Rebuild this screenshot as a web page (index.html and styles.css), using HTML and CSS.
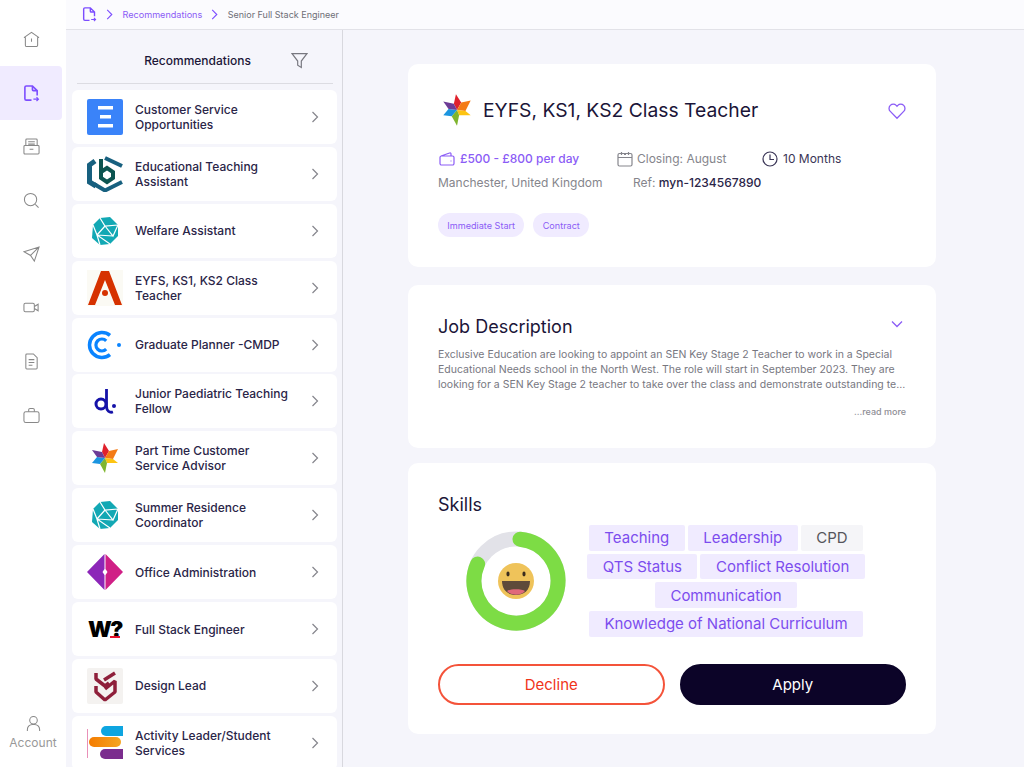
FILE: index.html
```html
<!DOCTYPE html>
<html lang="en">
<head>
    <meta charset="utf-8">
    <title>Senior Full Stack Engineer</title>
    <link rel="stylesheet" href="styles.css">
</head>
<body>
    <!-- shared icons and company logos -->
    <svg class="sprite" xmlns="http://www.w3.org/2000/svg">
        <symbol id="chev" viewBox="0 0 12 12"><path d="M3.500 1 8.500 6l-5 5" fill="none" stroke="currentColor" stroke-width="1.200"/></symbol>
        <symbol id="doc-arrow" viewBox="0 0 18 18"><path d="M9 16H3.500A1.500 1.500 0 0 1 2 14.500V2.500A1.500 1.500 0 0 1 3.500 1H10l5 5v5M10 1v4a1 1 0 0 0 1 1h4" fill="none" stroke="currentColor" stroke-width="1.700"/><path d="M11 15h5M14.300 13l2 2-2 2" fill="none" stroke="currentColor" stroke-width="1.300"/></symbol>
        <symbol id="logo-star" viewBox="0 0 36 36">
            <path d="M18 18 15 12 17 3l5 8z" fill="#e0212c"/>
            <path d="M18 18l4-7 9-2-5 10z" fill="#f47b16"/>
            <path d="M18 18l8 1 5 4H20z" fill="#fdc412"/>
            <path d="M18 18l2 5-2 10-5-9z" fill="#7fb52e"/>
            <path d="M18 18l-5 6-8-1 5-6z" fill="#1b95e0"/>
            <path d="M18 18l-8-1-5-7 10 2z" fill="#6d3b96"/>
        </symbol>
        <symbol id="logo-gem" viewBox="0 0 36 36">
            <path d="M13 5 23 4l8 8v11l-8 8-10 1-8-7 1-13z" fill="#12a8b4"/>
            <path d="M13 5l5 8 13-1M18 13 10 22l13 9M18 13l8 10 5-11M10 22l16 1M10 22 6 12M10 22l3 10" fill="none" stroke="#fff" stroke-width="1.200"/>
        </symbol>
    </svg>

    <div class="app">
        <nav class="sidebar">
            <a class="nav-item">
                <svg class="nav-icon" viewBox="0 0 18 18"><path d="M1 7 9 1.500 17 7M2.500 6.500V15a1.500 1.500 0 0 0 1.500 1.500h10a1.500 1.500 0 0 0 1.500-1.500V6.500M9 8v3.500"/></svg>
            </a>
            <a class="nav-item active">
                <svg class="nav-icon"><use href="#doc-arrow"/></svg>
            </a>
            <a class="nav-item">
                <svg class="nav-icon" viewBox="0 0 18 18"><path d="M3 8V2a1 1 0 0 1 1-1h10a1 1 0 0 1 1 1v6M5.500 4h7M5.500 6.500h7M2 8h14a1 1 0 0 1 1 1v7a1 1 0 0 1-1 1H2a1 1 0 0 1-1-1V9a1 1 0 0 1 1-1zM7 12h4"/></svg>
            </a>
            <a class="nav-item">
                <svg class="nav-icon" viewBox="0 0 18 18"><circle cx="8" cy="8" r="6.500"/><path d="m13 13 3.500 3.500"/></svg>
            </a>
            <a class="nav-item">
                <svg class="nav-icon" viewBox="0 0 18 18"><path d="M1 6 17 1 12 16 8 10zM8 10l9-9"/></svg>
            </a>
            <a class="nav-item">
                <svg class="nav-icon" viewBox="0 0 18 18"><rect x="1" y="4.500" width="11" height="9" rx="1.500"/><path d="m12 8 4-2.500v7L12 10"/></svg>
            </a>
            <a class="nav-item">
                <svg class="nav-icon" viewBox="0 0 18 18"><path d="M4 1h7l4 4v11a1 1 0 0 1-1 1H4a1 1 0 0 1-1-1V2a1 1 0 0 1 1-1zM6 7h6M6 10h6M6 13h4"/></svg>
            </a>
            <a class="nav-item">
                <svg class="nav-icon" viewBox="0 0 18 18"><rect x="1" y="5" width="16" height="11.500" rx="2"/><path d="M6 5V3a1.500 1.500 0 0 1 1.500-1.500h3A1.500 1.500 0 0 1 12 3v2"/></svg>
            </a>
            <a class="account">
                <svg class="nav-icon" viewBox="0 0 18 18"><circle cx="9" cy="5.500" r="4"/><path d="M2.500 17v-1.500A5.500 5.500 0 0 1 8 10h2a5.500 5.500 0 0 1 5.500 5.500V17"/></svg>
                <span>Account</span>
            </a>
        </nav>

        <div class="content">
            <header class="topbar">
                <svg class="crumb-doc"><use href="#doc-arrow"/></svg>
                <svg class="crumb-chev"><use href="#chev"/></svg>
                <span class="crumb-link">Recommendations</span>
                <svg class="crumb-chev"><use href="#chev"/></svg>
                <span class="crumb-current">Senior Full Stack Engineer</span>
            </header>

            <div class="columns">
                <aside class="list">
                    <div class="list-head">
                        <h2>Recommendations</h2>
                        <svg class="filter" viewBox="0 0 16 16"><path d="M1 1.500h14L9.700 8.500V14.500L6.300 12.500V8.500z"/></svg>
                    </div>

                    <div class="job">
                        <svg class="logo" viewBox="0 0 36 36">
                            <rect width="36" height="36" rx="2" fill="#3a83f9"/>
                            <path d="M11 7h15v3.500H11zM13 16h11v3.500H13zM11 25h15v3.500H11z" fill="#fff"/>
                        </svg>
                        <span class="job-name">Customer Service Opportunities</span>
                        <svg class="job-chev"><use href="#chev"/></svg>
                    </div>
                    <div class="job">
                        <svg class="logo" viewBox="0 0 36 36" fill="none">
                            <path d="M8 5 2.500 9v17L9 30" stroke="#17607f" stroke-width="5"/>
                            <path d="M7 28l11 6.500L35 26" stroke="#17607f" stroke-width="4"/>
                            <path d="M18 2l17 8" stroke="#17607f" stroke-width="4"/>
                            <path d="M14 3v19l6 4 6-4v-6l-6-4-6 4" stroke="#0c5450" stroke-width="4"/>
                        </svg>
                        <span class="job-name">Educational Teaching Assistant</span>
                        <svg class="job-chev"><use href="#chev"/></svg>
                    </div>
                    <div class="job">
                        <svg class="logo"><use href="#logo-gem"/></svg>
                        <span class="job-name">Welfare Assistant</span>
                        <svg class="job-chev"><use href="#chev"/></svg>
                    </div>
                    <div class="job">
                        <svg class="logo" viewBox="0 0 36 36">
                            <rect width="36" height="36" fill="#fbfaf4"/>
                            <path d="M14 1h8l13 34h-7L18 10 8 35H1z" fill="#d63200"/>
                            <circle cx="18" cy="23" r="3" fill="#d63200"/>
                        </svg>
                        <span class="job-name">EYFS, KS1, KS2 Class Teacher</span>
                        <svg class="job-chev"><use href="#chev"/></svg>
                    </div>
                    <div class="job">
                        <svg class="logo" viewBox="0 0 36 36" fill="none" stroke="#0a84ff">
                            <path d="M23 8.400A12.500 12.500 0 1 0 23 27.600" stroke-width="3.500"/>
                            <path d="M19.200 13.800A6 6 0 1 0 19.200 22.200" stroke-width="3.200"/>
                            <circle cx="32" cy="18" r="2" fill="#0a84ff" stroke="none"/>
                        </svg>
                        <span class="job-name">Graduate Planner -CMDP</span>
                        <svg class="job-chev"><use href="#chev"/></svg>
                    </div>
                    <div class="job">
                        <svg class="logo" viewBox="0 0 36 36" fill="none">
                            <circle cx="14" cy="21" r="5" stroke="#1512a8" stroke-width="3"/>
                            <path d="M19.500 6v17c0 5 3 7 6.500 6" stroke="#1512a8" stroke-width="2.800"/>
                            <circle cx="27" cy="23" r="2" fill="#1512a8"/>
                        </svg>
                        <span class="job-name">Junior Paediatric Teaching Fellow</span>
                        <svg class="job-chev"><use href="#chev"/></svg>
                    </div>
                    <div class="job">
                        <svg class="logo"><use href="#logo-star"/></svg>
                        <span class="job-name">Part Time Customer Service Advisor</span>
                        <svg class="job-chev"><use href="#chev"/></svg>
                    </div>
                    <div class="job">
                        <svg class="logo"><use href="#logo-gem"/></svg>
                        <span class="job-name">Summer Residence Coordinator</span>
                        <svg class="job-chev"><use href="#chev"/></svg>
                    </div>
                    <div class="job">
                        <svg class="logo" viewBox="0 0 36 36">
                            <path d="M17.500 0v15l-2 3 2 3v15L0 18z" fill="#8c26b8"/>
                            <path d="M18.500 0 36 18 18.500 36V21l2-3-2-3z" fill="#d01f86"/>
                        </svg>
                        <span class="job-name">Office Administration</span>
                        <svg class="job-chev"><use href="#chev"/></svg>
                    </div>
                    <div class="job">
                        <span class="logo logo-w">W?</span>
                        <span class="job-name">Full Stack Engineer</span>
                        <svg class="job-chev"><use href="#chev"/></svg>
                    </div>
                    <div class="job">
                        <svg class="logo" viewBox="0 0 36 36" fill="none">
                            <rect width="36" height="36" rx="2" fill="#f4f2f0"/>
                            <path d="M9 5v6l9 7 4-3M28 5l-11 7M9 18v6l9 8 10-8V13l-10 8" stroke="#8e1f3a" stroke-width="3.500" stroke-linejoin="bevel"/>
                        </svg>
                        <span class="job-name">Design Lead</span>
                        <svg class="job-chev"><use href="#chev"/></svg>
                    </div>
                    <div class="job">
                        <svg class="logo" viewBox="0 0 36 36">
                            <defs>
                                <linearGradient id="orange"><stop offset="0" stop-color="#f47b00"/><stop offset="1" stop-color="#f5a623"/></linearGradient>
                            </defs>
                            <rect x="0" y="4" width="0.700" height="29" fill="#e0609a"/>
                            <path d="M19 1h17v10H19a5 5 0 0 1 0-10z" fill="#0ea5e0"/>
                            <rect x="2" y="12" width="32" height="10" rx="5" fill="url(#orange)"/>
                            <path d="M18 24h18v10H18a5 5 0 0 1 0-10z" fill="#7b2d8e"/>
                        </svg>
                        <span class="job-name">Activity Leader/Student Services</span>
                        <svg class="job-chev"><use href="#chev"/></svg>
                    </div>
                </aside>

                <main class="detail">
                    <section class="card card-head">
                        <div class="title-row">
                            <svg class="title-logo"><use href="#logo-star"/></svg>
                            <h1>EYFS, KS1, KS2 Class Teacher</h1>
                            <svg class="heart" viewBox="0 0 18 18"><path d="M9 16.200 2.300 9.400a4.200 4.200 0 0 1 0-6A4.200 4.200 0 0 1 8.200 3.400l.8.900.8-.9a4.200 4.200 0 0 1 5.900 0 4.200 4.200 0 0 1 0 6z"/></svg>
                        </div>
                        <div class="meta-row">
                            <span class="meta pay">
                                <svg class="meta-icon" viewBox="0 0 16 16"><path d="M2 5 10.500 2a1 1 0 0 1 1.500 1v2M2.500 5h11A1.500 1.500 0 0 1 15 6.500v6a1.500 1.500 0 0 1-1.500 1.500h-11A1.500 1.500 0 0 1 1 12.500v-6A1.500 1.500 0 0 1 2.500 5zM11.500 10h1"/></svg>
                                £500 - £800 per day
                            </span>
                            <span class="meta closing">
                                <svg class="meta-icon" viewBox="0 0 16 16"><rect x="1" y="2.500" width="14" height="12.500" rx="1.500"/><path d="M1 6.500h14M4.500 1v3M11.500 1v3M7 3.500h2"/></svg>
                                Closing: August
                            </span>
                            <span class="meta months">
                                <svg class="meta-icon" viewBox="0 0 16 16"><circle cx="8" cy="8" r="7"/><path d="M8 3.500V8.500h4"/></svg>
                                10 Months
                            </span>
                        </div>
                        <div class="meta-row second">
                            <span class="place">Manchester, United Kingdom</span>
                            <span class="ref">Ref: <b>myn-1234567890</b></span>
                        </div>
                        <div class="tags">
                            <span class="tag">Immediate Start</span>
                            <span class="tag">Contract</span>
                        </div>
                    </section>

                    <section class="card card-desc">
                        <div class="desc-head">
                            <h3>Job Description</h3>
                            <svg class="desc-chev" viewBox="0 0 12 8"><path d="M1 1.500 6 6.500l5-5"/></svg>
                        </div>
                        <p class="desc-text">Exclusive Education are looking to appoint an SEN Key Stage 2 Teacher to work in a Special Educational Needs school in the North West. The role will start in September 2023. They are looking for a SEN Key Stage 2 teacher to take over the class and demonstrate outstanding te...</p>
                        <div class="read-more">...read more</div>
                    </section>

                    <section class="card card-skills">
                        <h3>Skills</h3>
                        <div class="skills-row">
                            <svg class="donut" viewBox="0 0 100 100">
                                <circle class="donut-track" cx="50" cy="50" r="42"/>
                                <path class="donut-fill" d="M54 8.200A42 42 0 1 1 11.600 33"/>
                                <circle cx="50" cy="50" r="18" fill="#efc35a"/>
                                <ellipse cx="42" cy="43" rx="1.600" ry="2.400" fill="#3a2c1e"/>
                                <ellipse cx="58" cy="43" rx="1.600" ry="2.400" fill="#3a2c1e"/>
                                <path d="M36 50h28c0 9-6 14-14 14s-14-5-14-14z" fill="#5e4a3a"/>
                                <path d="M41 60c3-2.500 15-2.500 18 0-4 5-14 5-18 0z" fill="#e0697a"/>
                            </svg>
                            <div class="chips">
                                <span class="chip">Teaching</span>
                                <span class="chip">Leadership</span>
                                <span class="chip off">CPD</span>
                                <span class="chip">QTS Status</span>
                                <span class="chip">Conflict Resolution</span>
                                <span class="chip">Communication</span>
                                <span class="chip">Knowledge of National Curriculum</span>
                            </div>
                        </div>
                        <div class="actions">
                            <button class="btn decline">Decline</button>
                            <button class="btn apply">Apply</button>
                        </div>
                    </section>
                </main>
            </div>
        </div>
    </div>
</body>
</html>
```

FILE: styles.css
```css
* {
    box-sizing: border-box;
}
html, body {
    margin: 0;
    height: 100%;
    overflow: hidden;
}
body {
    font-family: "Inter", "Liberation Sans", sans-serif;
    color: #1b1538;
    background: #f5f5fb;
}
h1, h2, h3, p {
    margin: 0;
    font-weight: 500;
}
.sprite {
    display: none;
}
.app {
    display: flex;
    height: 100vh;
}

/* left nav */
.sidebar {
    width: 66px;
    flex: none;
    background: #fff;
    padding-top: 12.5px;
    display: flex;
    flex-direction: column;
}
.nav-item {
    width: 62px;
    height: 53.7px;
    flex: none;
    display: flex;
    align-items: center;
    justify-content: center;
    color: #888;
    border-radius: 0 4px 4px 0;
}
.nav-item.active {
    background: #f0ebff;
    color: #7c4dff;
}
.nav-icon {
    width: 17px;
    height: 17px;
    fill: none;
    stroke: #888;
    stroke-width: 1.1;
}
.active .nav-icon {
    stroke: none;
    color: #7c4dff;
}
.account {
    margin-top: auto;
    padding-bottom: 17px;
    display: flex;
    flex-direction: column;
    align-items: center;
    gap: 3px;
    font-size: 12px;
    line-height: 15px;
    color: #999;
}

.content {
    flex: 1;
    min-width: 0;
    display: flex;
    flex-direction: column;
}

/* breadcrumb */
.topbar {
    height: 30px;
    flex: none;
    display: flex;
    align-items: center;
    padding-left: 16px;
    background: #fbfbfe;
    border-bottom: 1px solid #e2e2e8;
    font-size: 9px;
}
.crumb-doc {
    width: 15px;
    height: 15px;
    color: #7c4dff;
}
.crumb-chev {
    width: 11px;
    height: 11px;
    margin: 0 7.5px 0 7px;
    color: #7c4dff;
}
.crumb-link {
    color: #8b5cf6;
    font-size: 9.1px;
}
.crumb-current {
    color: #6e6e76;
}

.columns {
    flex: 1;
    min-height: 0;
    display: flex;
}

/* recommendations column */
.list {
    width: 277px;
    flex: none;
    padding: 0 5px 0 6px;
    border-right: 1px solid #d8d8de;
    overflow: hidden;
}
.list-head {
    height: 54px;
    margin: 0 4px 6px 5px;
    padding: 8px 0 0 42px;
    display: flex;
    align-items: center;
    justify-content: center;
    gap: 40px;
    border-bottom: 1px solid #dcdce2;
}
.list-head h2 {
    font-size: 12px;
}
.filter {
    width: 17px;
    height: 17px;
    fill: none;
    stroke: #77777f;
    stroke-width: 1.1;
}
.job {
    height: 54px;
    margin-bottom: 2.9px;
    padding: 0 15px;
    display: flex;
    align-items: center;
    background: #fff;
    border-radius: 6px;
}
.logo {
    width: 36px;
    height: 36px;
    flex: none;
    margin-right: 12px;
}
.logo-w {
    position: relative;
    display: flex;
    align-items: center;
    justify-content: center;
    font-size: 22px;
    font-weight: 900;
    letter-spacing: -1.5px;
    color: #000;
}
.logo-w::after {
    content: "";
    position: absolute;
    right: 3px;
    bottom: 9px;
    width: 10px;
    height: 2.500px;
    background: #e8112d;
}
.job-name {
    flex: 1;
    font-size: 12px;
    line-height: 15px;
    font-weight: 500;
    color: #2a2548;
    padding-right: 20px;
}
.job-chev {
    width: 12px;
    height: 12px;
    flex: none;
    margin-right: 1px;
    color: #85858c;
}

/* detail column */
.detail {
    flex: 1;
    min-width: 0;
    padding: 34px 0 0 65px;
}
.card {
    width: 528px;
    background: #fff;
    border-radius: 10px;
    padding: 0 30px;
}
.card-head {
    height: 203px;
    padding-top: 28px;
    margin-bottom: 18px;
}
.title-row {
    display: flex;
    align-items: center;
    height: 36px;
}
.title-logo {
    width: 38px;
    height: 38px;
    flex: none;
    margin: 0 7px 0 0;
}
.title-row h1 {
    flex: 1;
    font-size: 19.3px;
    font-weight: 400;
}
.heart {
    width: 18px;
    height: 18px;
    margin-top: 2px;
    fill: none;
    stroke: #8b5cf6;
    stroke-width: 1.300;
}
.meta-row {
    display: flex;
    align-items: center;
    height: 20px;
    margin-top: 21px;
    font-size: 12px;
    line-height: 20px;
}
.meta-row.second {
    margin-top: 4px;
}
.meta {
    display: flex;
    align-items: center;
    gap: 5px;
}
.meta-icon {
    width: 16px;
    height: 16px;
    fill: none;
    stroke: currentColor;
    stroke-width: 1.200;
}
.pay {
    width: 179px;
    padding-left: 1px;
    color: #8b5cf6;
    font-weight: 500;
}
.closing {
    width: 145px;
    gap: 4px;
    color: #85858c;
}
.months {
    color: #3a3556;
}
.place {
    width: 195px;
    color: #85858c;
}
.ref {
    color: #85858c;
}
.ref b {
    font-weight: 500;
    color: #2a2548;
}
.tags {
    display: flex;
    gap: 9px;
    margin-top: 20px;
}
.tag {
    height: 24px;
    padding: 0 9.300px;
    display: flex;
    align-items: center;
    font-size: 9.1px;
    color: #8b5cf6;
    background: #f0ebff;
    border-radius: 12px;
}

.card-desc {
    height: 163px;
    padding-top: 30px;
    margin-bottom: 15px;
}
.desc-head {
    display: flex;
    justify-content: space-between;
    height: 24px;
}
.desc-head h3,
.card-skills h3 {
    font-size: 18px;
    font-weight: 400;
    line-height: 24px;
}
.desc-chev {
    width: 12px;
    height: 8px;
    margin: 5px 3px 0 0;
    fill: none;
    stroke: #8b5cf6;
    stroke-width: 1.300;
}
.desc-text {
    margin-top: 8px;
    font-size: 10.5px;
    line-height: 15px;
    color: #77777f;
    font-weight: 400;
}
.read-more {
    margin-top: 13px;
    text-align: right;
    font-size: 9px;
    line-height: 14px;
    font-weight: 500;
    color: #8e8e95;
}

.card-skills {
    height: 271px;
    padding-top: 30px;
}
.skills-row {
    display: flex;
    align-items: center;
    margin-top: 8px;
}
.donut {
    width: 100px;
    height: 100px;
    flex: none;
    margin: 0 15px 0 28px;
}
.donut-track {
    fill: none;
    stroke: #e2e2e8;
    stroke-width: 15;
}
.donut-fill {
    fill: none;
    stroke: #7ddc45;
    stroke-width: 15;
    stroke-linecap: round;
}
.chips {
    width: 290px;
    display: flex;
    flex-wrap: wrap;
    justify-content: center;
    gap: 3px;
}
.chip {
    height: 25.700px;
    padding: 0 15.500px;
    display: flex;
    align-items: center;
    font-size: 15px;
    color: #7c4dee;
    background: #f0ebff;
    border-radius: 2px;
}
.chip.off {
    color: #55555c;
    background: #f5f5f8;
}

.actions {
    display: flex;
    gap: 15px;
    margin-top: 27px;
}
.btn {
    flex: 1;
    height: 41px;
    font-family: inherit;
    font-size: 15px;
    border-radius: 21px;
    border: 2px solid transparent;
}
.decline {
    color: #f0341a;
    background: #fff;
    border-color: #f4533a;
}
.apply {
    color: #fff;
    background: #0c0428;
    border-color: #0c0428;
}
```
